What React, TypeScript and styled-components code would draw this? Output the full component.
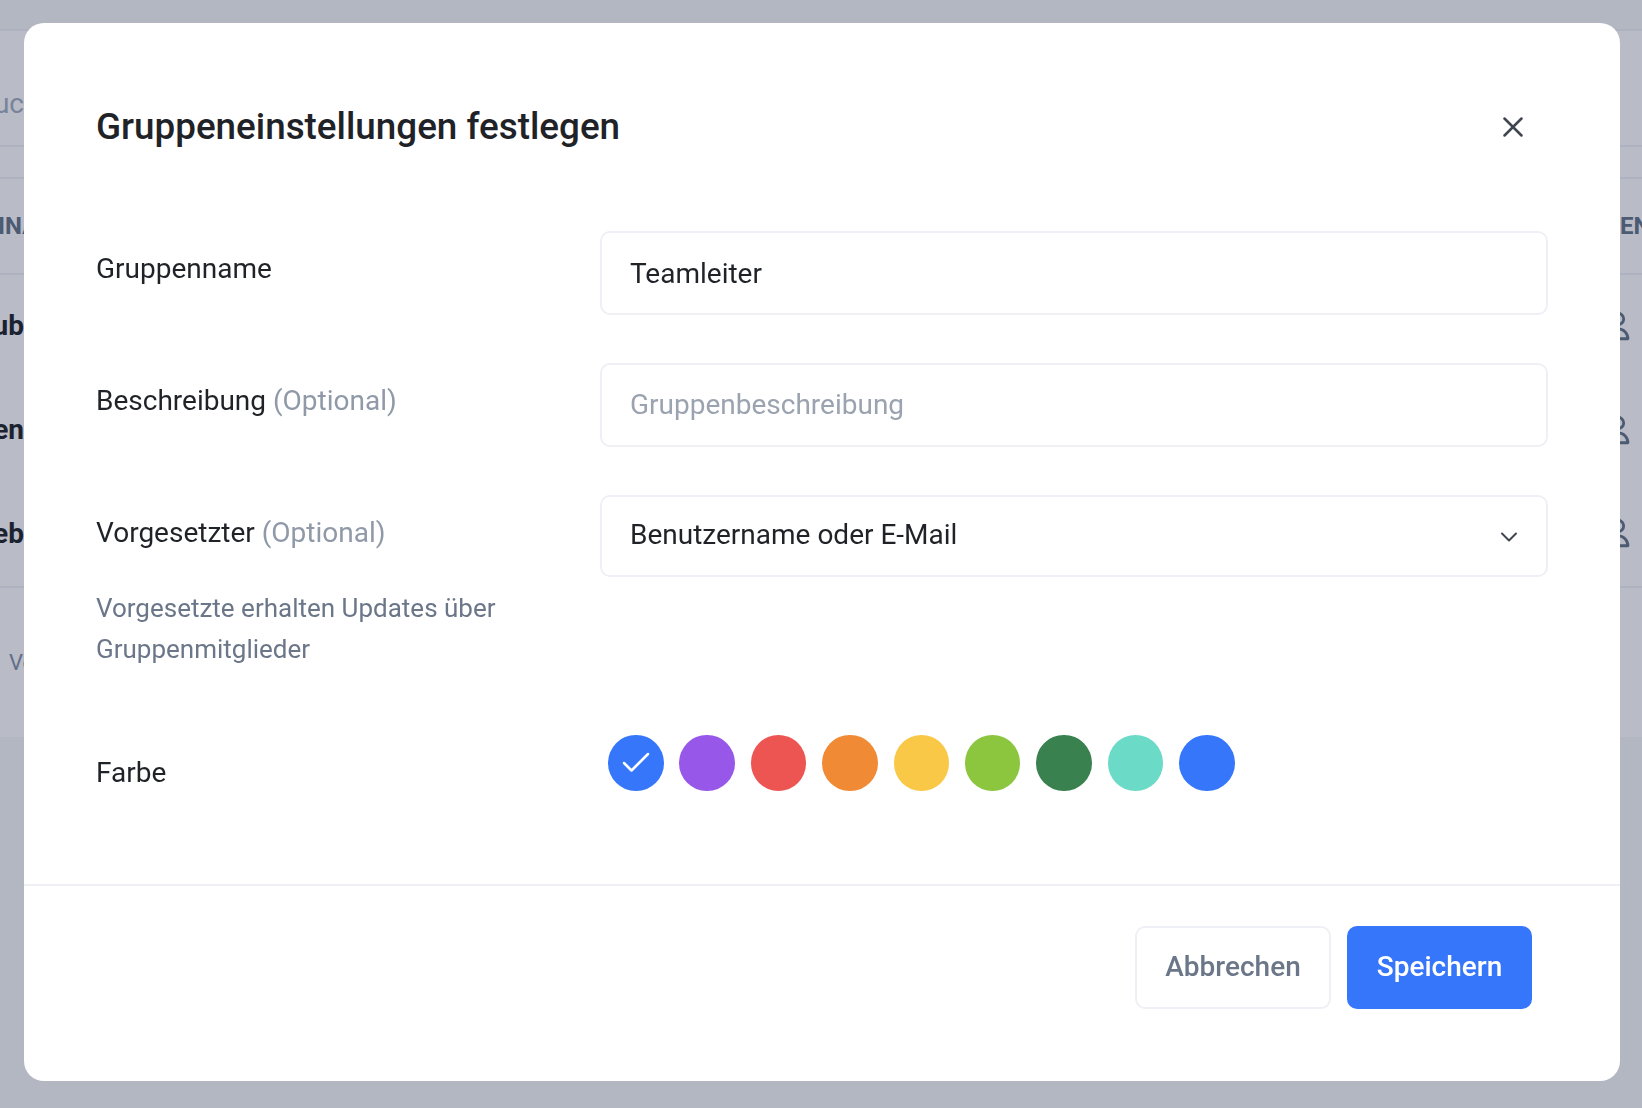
import { Check, ChevronDown, X } from "lucide-react";
import { HiOutlineUser } from "react-icons/hi";
import { createGlobalStyle, styled } from "styled-components";

const COLORS = [
  "#3576fa",
  "#9757e8",
  "#ec5551",
  "#f18a35",
  "#f9c846",
  "#8cc63f",
  "#3a8150",
  "#6bdbc8",
  "#3576fa",
];

const GROUPS = ["Urlaub", "Finanzen", "Vertrieb"];

const App = () => {
  return (
    <>
      <GlobalStyle />
      {/* page behind the dialog */}
      <Page>
        <TopStrip />
        <SearchRow>
          <LeftEdge $tone="muted">Suc</LeftEdge>
        </SearchRow>
        <TableHead>
          <HeadLeft $tone="head">INAME</HeadLeft>
          <RightEdge $tone="head">EN</RightEdge>
        </TableHead>
        <Rows>
          {GROUPS.map((group) => (
            <TableRow key={group}>
              <LeftEdge $tone="strong">{group}</LeftEdge>
              <RightEdge $tone="head">
                <PersonIcon size={34} />
              </RightEdge>
            </TableRow>
          ))}
        </Rows>
        <PagerRow>
          <PagerText>Von</PagerText>
        </PagerRow>
      </Page>

      <Overlay>
        <Modal>
          <Header>
            <Title>Gruppeneinstellungen festlegen</Title>
            <CloseButton aria-label="Schließen">
              <X size={34} strokeWidth={1.75} />
            </CloseButton>
          </Header>

          <Body>
            <FormRow>
              <Label>Gruppenname</Label>
              <Field $shift={1}>Teamleiter</Field>
            </FormRow>
            <FormRow>
              <Label>
                Beschreibung <Optional>(Optional)</Optional>
              </Label>
              <Field $placeholder $shift={-1}>Gruppenbeschreibung</Field>
            </FormRow>
            <FormRow>
              <div>
                <Label>
                  Vorgesetzter <Optional>(Optional)</Optional>
                </Label>
                <Helper>
                  Vorgesetzte erhalten Updates über
                  <br />
                  Gruppenmitglieder
                </Helper>
              </div>
              <SelectField $shift={-3}>
                Benutzername oder E-Mail
                <SelectChevron size={28} strokeWidth={1.7} />
              </SelectField>
            </FormRow>
            <ColorRow>
              <Label>Farbe</Label>
              <Swatches>
                {COLORS.map((color, i) => (
                  <Swatch key={i} $color={color}>
                    {i === 0 && <Check size={36} strokeWidth={1.7} color="#fff" />}
                  </Swatch>
                ))}
              </Swatches>
            </ColorRow>
          </Body>

          <Footer>
            <CancelButton>Abbrechen</CancelButton>
            <SaveButton>Speichern</SaveButton>
          </Footer>
        </Modal>
      </Overlay>
    </>
  );
};

export default App;

const GlobalStyle = createGlobalStyle`
  html, body {
    margin: 0;
    height: 100%;
    overflow: hidden;
    font-family: Roboto, "Liberation Sans", sans-serif;
  }
`;

const TONES = {
  muted: "#a4aebd",
  head: "#647386",
  strong: "#1e2327",
};

type Tone = keyof typeof TONES;

const Page = styled.div`
  height: 1108px;
  background: #f6f8f8;
  display: flex;
  flex-direction: column;
`;

const TopStrip = styled.div`
  height: 29px;
  flex: none;
`;

const Band = styled.div`
  display: flex;
  justify-content: space-between;
  align-items: center;
  background: #fff;
  flex: none;
  box-sizing: border-box;
`;

const SearchRow = styled(Band)`
  height: 150px;
  padding-bottom: 2px;
  border-top: 2px solid #f0f1f5;
  border-bottom: 2px solid #f0f1f5;
  position: relative;

  &::after {
    content: "";
    position: absolute;
    left: 0;
    right: 0;
    top: 114px;
    height: 2px;
    background: #f0f1f5;
  }
`;

const TableHead = styled(Band)`
  height: 96px;
  border-bottom: 2px solid #f0f1f5;
`;

const Rows = styled.div`
  height: 313px;
  flex: none;
  box-sizing: border-box;
  background: #fff;
  border-bottom: 2px solid #f0f1f5;
  display: flex;
  flex-direction: column;
`;

const TableRow = styled(Band)`
  flex: 1;
  background: none;
  padding-bottom: 2px;
`;

const PagerRow = styled.div`
  height: 149px;
  flex: none;
  background: #fff;
  display: flex;
  align-items: center;
`;

const PagerText = styled.span`
  padding-left: 9px;
  font-size: 22px;
  color: #8391a5;
`;

const LeftEdge = styled.div<{ $tone: Tone }>`
  width: 24px;
  display: flex;
  justify-content: flex-end;
  white-space: nowrap;
  font-size: 28px;
  font-weight: ${(p) => (p.$tone === "muted" ? 400 : 700)};
  color: ${(p) => TONES[p.$tone]};
`;

const HeadLeft = styled(LeftEdge)`
  justify-content: flex-start;
  font-size: 24px;
  margin-left: -2px;
`;

const RightEdge = styled.div<{ $tone: Tone }>`
  width: 22px;
  display: flex;
  white-space: nowrap;
  font-size: 24px;
  font-weight: 700;
  color: ${(p) => TONES[p.$tone]};
`;

const PersonIcon = styled(HiOutlineUser)`
  flex: none;
  margin-left: -19px;
`;

const Overlay = styled.div`
  position: fixed;
  inset: 0;
  background: rgba(22, 32, 68, 0.3);
  box-sizing: border-box;
  padding: 23px 22px 27px 24px;
  display: flex;
`;

const Modal = styled.div`
  flex: 1;
  background: #fff;
  border-radius: 20px;
  display: flex;
  flex-direction: column;
  color: #1f2328;
`;

const Header = styled.div`
  height: 208px;
  flex: none;
  box-sizing: border-box;
  padding: 0 72px 2px;
  display: flex;
  align-items: center;
  justify-content: space-between;
`;

const Title = styled.h2`
  margin: 0;
  font-size: 36.8px;
  font-weight: 500;
`;

const CloseButton = styled.button`
  border: none;
  background: none;
  padding: 2px 0 0;
  display: flex;
  color: #3f4650;
  margin-right: 18px;
`;

const Body = styled.div`
  flex: 1;
  padding: 0 72px;
  display: flex;
  flex-direction: column;
  gap: 48px;
`;

const FormRow = styled.div`
  display: grid;
  grid-template-columns: 504px 1fr;
`;

const ColorRow = styled(FormRow)`
  margin-top: 17px;
`;

const Label = styled.div`
  padding-top: 18px;
  font-size: 28px;
  line-height: 40px;
`;

const Optional = styled.span`
  color: #8f99a8;
`;

const Helper = styled.p`
  margin: 35px 0 0;
  font-size: 26px;
  line-height: 41px;
  color: #6b7789;
`;

const Field = styled.div<{ $placeholder?: boolean; $shift?: number }>`
  height: 84px;
  box-sizing: border-box;
  border: 2px solid #eff0f5;
  border-radius: 10px;
  padding: ${(p) => Math.max(p.$shift ?? 0, 0)}px 28px ${(p) => Math.max(-(p.$shift ?? 0), 0)}px;
  display: flex;
  align-items: center;
  font-size: 28px;
  color: ${(p) => (p.$placeholder ? "#9aa3af" : "#1f2328")};
`;

const SelectField = styled(Field)`
  height: 82px;
  justify-content: space-between;
  padding-right: 23px;
`;

const SelectChevron = styled(ChevronDown)`
  color: #3f4650;
  margin-top: 5px;
`;

const Swatches = styled.div`
  display: flex;
  gap: 15.9px;
  padding-left: 8px;
`;

const Swatch = styled.div<{ $color: string }>`
  width: 55.5px;
  height: 55.5px;
  border-radius: 50%;
  background: ${(p) => p.$color};
  display: flex;
  align-items: center;
  justify-content: center;
`;

const Footer = styled.div`
  flex: none;
  border-top: 2px solid #eff0f5;
  padding: 40px 88px 72px 0;
  display: flex;
  justify-content: flex-end;
  gap: 16px;
`;

const BaseButton = styled.button`
  height: 83px;
  box-sizing: border-box;
  border-radius: 10px;
  font-family: inherit;
  font-size: 28px;
  font-weight: 500;
  padding: 0 0 2px;
`;

const CancelButton = styled(BaseButton)`
  width: 196px;
  border: 2px solid #eff0f5;
  background: #fff;
  color: #6b7789;
`;

const SaveButton = styled(BaseButton)`
  width: 185px;
  border: none;
  background: #3576fa;
  color: #fff;
`;
